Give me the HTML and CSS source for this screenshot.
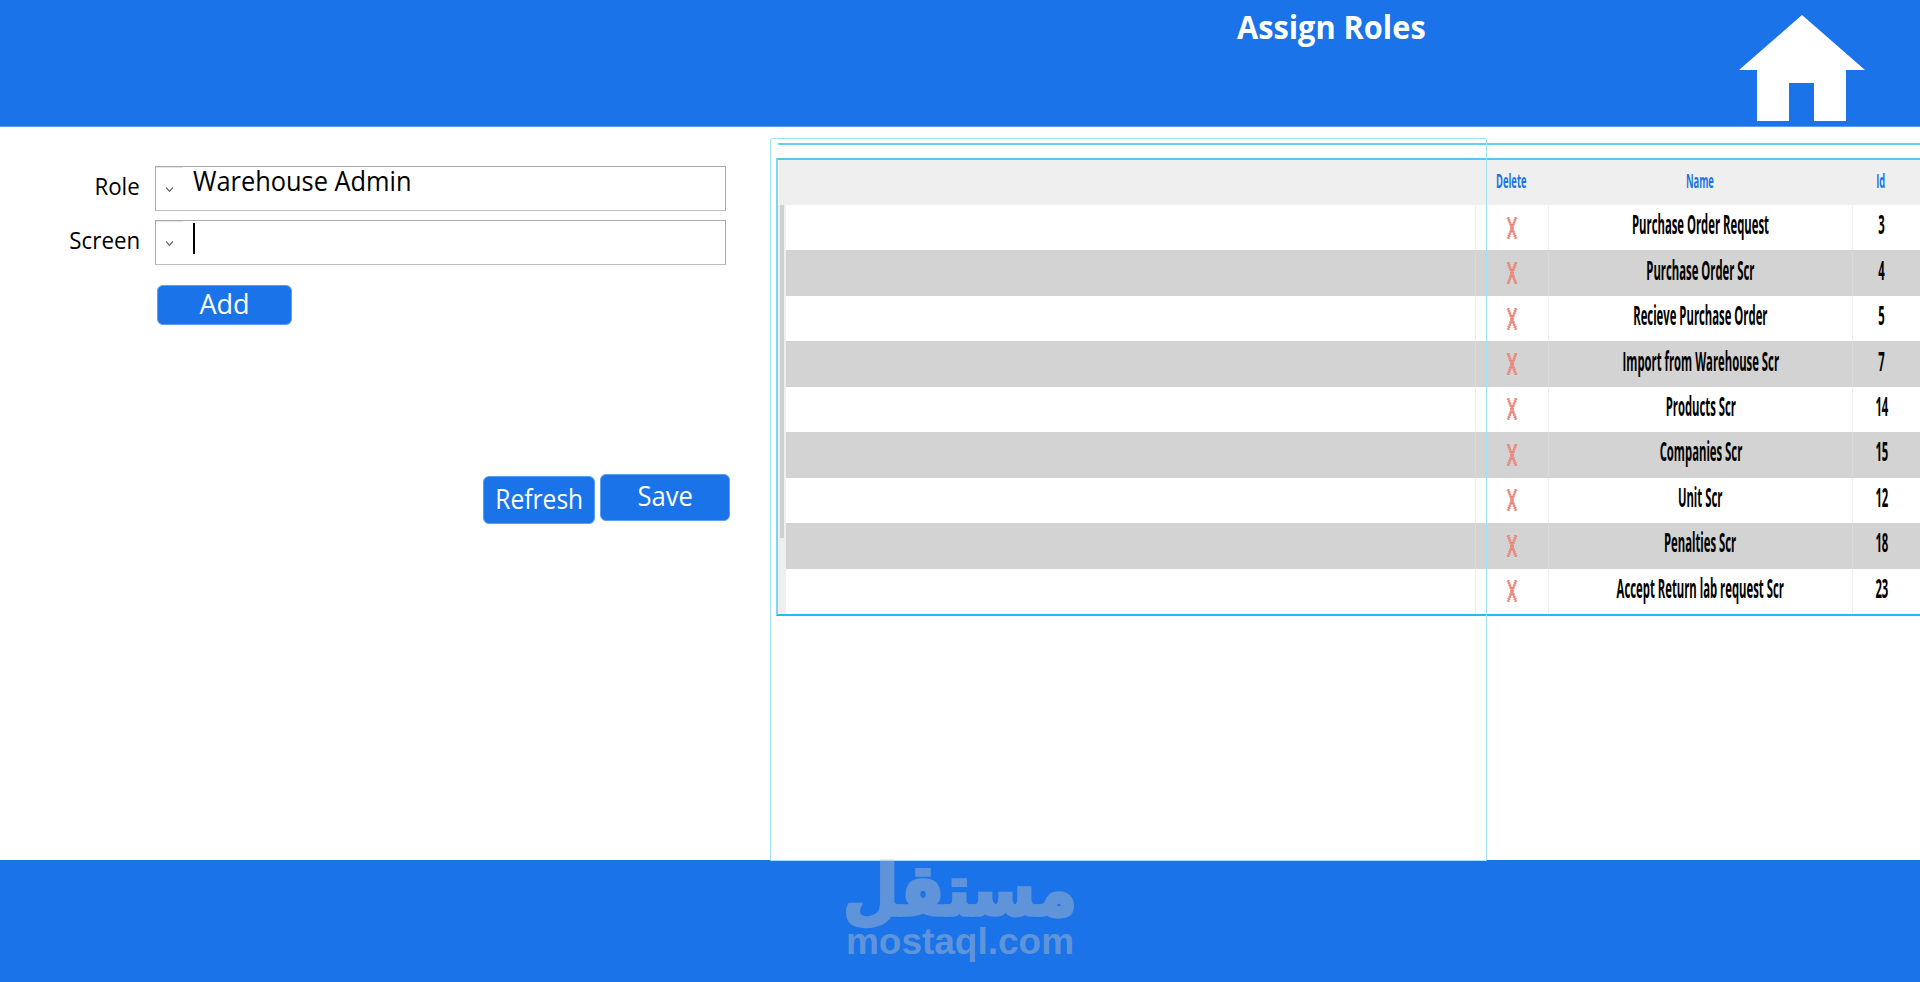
FILE: index.html
```html
<!DOCTYPE html>
<html lang="en">
<head>
<meta charset="utf-8">
<title>Assign Roles</title>
<link rel="stylesheet" href="styles.css">
</head>
<body>
<div class="page">
  <header class="topbar">
    <h1 class="title"><span class="title-text">Assign Roles</span></h1>
    <svg class="home" viewBox="0 0 126 106" aria-label="Home"><path d="M63 0 126 55H107V106H75V68H50V106H18V55H0Z" fill="#fff"/></svg>
  </header>
  <main class="main">
    <section class="form">
      <div class="fields">
        <label class="label"><span class="label-text">Role</span></label>
        <div class="combo">
          <span class="combo-btn"><svg class="chev" viewBox="0 0 8 6"><path d="M1 1.2 4 4.6 7 1.2" fill="none" stroke="#666" stroke-width="1.1"/></svg></span>
          <span class="combo-value">Warehouse Admin</span>
        </div>
        <label class="label"><span class="label-text">Screen</span></label>
        <div class="combo">
          <span class="combo-btn"><svg class="chev" viewBox="0 0 8 6"><path d="M1 1.2 4 4.6 7 1.2" fill="none" stroke="#666" stroke-width="1.1"/></svg></span>
          <span class="caret"></span>
        </div>
      </div>
      <button class="btn btn-add"><span class="btn-text">Add</span></button>
      <div class="actions">
        <button class="btn btn-refresh"><span class="btn-text">Refresh</span></button>
        <button class="btn btn-save"><span class="btn-text">Save</span></button>
      </div>
    </section>
    <section class="panel">
      <div class="panel-line"></div>
      <div class="grid">
        <div class="grid-head">
          <div class="hcell"></div>
          <div class="hcell"><span class="h-text">Delete</span></div>
          <div class="hcell"><span class="h-text">Name</span></div>
          <div class="hcell hcell-id"><span class="h-text">Id</span></div>
        </div>
        <div class="grid-body">
          <div class="gutter"><div class="thumb"></div></div>
          <div class="rows">
            <div class="row"><div class="cell"></div><div class="cell"><svg class="del" viewBox="0 0 12 22"><path class="del-edge" d="M2 .5 10 21.5M10 .5 2 21.5"/><path class="del-fill" d="M2 .5 10 21.5M10 .5 2 21.5"/></svg></div><div class="cell"><span class="c-text">Purchase Order Request</span></div><div class="cell cell-id"><span class="c-text">3</span></div></div>
            <div class="row alt"><div class="cell"></div><div class="cell"><svg class="del" viewBox="0 0 12 22"><path class="del-edge" d="M2 .5 10 21.5M10 .5 2 21.5"/><path class="del-fill" d="M2 .5 10 21.5M10 .5 2 21.5"/></svg></div><div class="cell"><span class="c-text">Purchase Order Scr</span></div><div class="cell cell-id"><span class="c-text">4</span></div></div>
            <div class="row"><div class="cell"></div><div class="cell"><svg class="del" viewBox="0 0 12 22"><path class="del-edge" d="M2 .5 10 21.5M10 .5 2 21.5"/><path class="del-fill" d="M2 .5 10 21.5M10 .5 2 21.5"/></svg></div><div class="cell"><span class="c-text">Recieve Purchase Order</span></div><div class="cell cell-id"><span class="c-text">5</span></div></div>
            <div class="row alt"><div class="cell"></div><div class="cell"><svg class="del" viewBox="0 0 12 22"><path class="del-edge" d="M2 .5 10 21.5M10 .5 2 21.5"/><path class="del-fill" d="M2 .5 10 21.5M10 .5 2 21.5"/></svg></div><div class="cell"><span class="c-text">Import from Warehouse Scr</span></div><div class="cell cell-id"><span class="c-text">7</span></div></div>
            <div class="row"><div class="cell"></div><div class="cell"><svg class="del" viewBox="0 0 12 22"><path class="del-edge" d="M2 .5 10 21.5M10 .5 2 21.5"/><path class="del-fill" d="M2 .5 10 21.5M10 .5 2 21.5"/></svg></div><div class="cell"><span class="c-text">Products Scr</span></div><div class="cell cell-id"><span class="c-text">14</span></div></div>
            <div class="row alt"><div class="cell"></div><div class="cell"><svg class="del" viewBox="0 0 12 22"><path class="del-edge" d="M2 .5 10 21.5M10 .5 2 21.5"/><path class="del-fill" d="M2 .5 10 21.5M10 .5 2 21.5"/></svg></div><div class="cell"><span class="c-text">Companies Scr</span></div><div class="cell cell-id"><span class="c-text">15</span></div></div>
            <div class="row"><div class="cell"></div><div class="cell"><svg class="del" viewBox="0 0 12 22"><path class="del-edge" d="M2 .5 10 21.5M10 .5 2 21.5"/><path class="del-fill" d="M2 .5 10 21.5M10 .5 2 21.5"/></svg></div><div class="cell"><span class="c-text">Unit Scr</span></div><div class="cell cell-id"><span class="c-text">12</span></div></div>
            <div class="row alt"><div class="cell"></div><div class="cell"><svg class="del" viewBox="0 0 12 22"><path class="del-edge" d="M2 .5 10 21.5M10 .5 2 21.5"/><path class="del-fill" d="M2 .5 10 21.5M10 .5 2 21.5"/></svg></div><div class="cell"><span class="c-text">Penalties Scr</span></div><div class="cell cell-id"><span class="c-text">18</span></div></div>
            <div class="row"><div class="cell"></div><div class="cell"><svg class="del" viewBox="0 0 12 22"><path class="del-edge" d="M2 .5 10 21.5M10 .5 2 21.5"/><path class="del-fill" d="M2 .5 10 21.5M10 .5 2 21.5"/></svg></div><div class="cell"><span class="c-text">Accept Return lab request Scr</span></div><div class="cell cell-id"><span class="c-text">23</span></div></div>
          </div>
        </div>
      </div>
    </section>
    <div class="outer-frame"></div>
  </main>
  <footer class="footer"></footer>
  <div class="watermark">
    <div class="wm-ar" lang="ar" dir="rtl"><span class="wm-ar-text">مستقل</span></div>
    <div class="wm-en">mostaql.com</div>
  </div>
</div>
</body>
</html>
```

FILE: styles.css
```css
* { box-sizing: border-box; }
html, body { margin: 0; padding: 0; background: #fff; }
body { font-family: "Open Sans", "Noto Sans", sans-serif; color: #000; overflow: hidden; }
.page { position: relative; display: flex; flex-direction: column; width: 1920px; height: 982px; overflow: hidden; }

.topbar { flex: none; display: flex; justify-content: flex-end; align-items: flex-start; height: 127px; background: #1a73e8; border-bottom: 1px solid #5a9cf0; padding-right: 55px; }
.title { margin: 5px 313px 0 0; width: 190px; height: 44px; font-size: 32px; line-height: 44px; font-weight: 700; color: #fff; text-align: center; white-space: nowrap; display: flex; justify-content: center; }
.title-text { display: inline-block; transform: scaleX(.96); }
.home { width: 126px; height: 106px; margin-top: 15px; display: block; }

.main { position: relative; flex: none; height: 733px; display: flex; }

.form { flex: none; width: 776px; padding-top: 39px; }
.fields { display: grid; grid-template-columns: 140px 571px; column-gap: 15px; row-gap: 9px; grid-auto-rows: 45px; }
.label { display: flex; justify-content: flex-end; align-items: center; font-size: 24px; line-height: 32px; padding-bottom: 5px; }
.label-text { display: inline-block; transform-origin: right center; transform: scaleX(.93); }
.combo { display: flex; align-items: flex-start; border: 1px solid #a9a9ae; border-bottom-color: #bdbdc0; background: #fff; }
.combo-btn { flex: none; width: 27px; height: 43px; display: flex; align-items: center; justify-content: center; border-top: 1px solid #e4e4e4; }
.chev { width: 9px; height: 7px; display: block; }
.combo-value { margin: 0 0 0 10px; font-size: 27px; line-height: 28px; white-space: nowrap; display: inline-block; transform-origin: left center; transform: scaleX(.94); }
.caret { width: 2px; height: 31px; margin: 2px 0 0 10px; background: #000; }

.btn { display: block; padding: 0 0 3px; background: #1a73e8; border: 1px solid #5aa0f2; border-radius: 6px; color: #fff; font-family: inherit; font-size: 27px; line-height: 34px; cursor: pointer; }
.btn-text { display: inline-block; white-space: nowrap; }
.btn-add { width: 135px; height: 40px; margin: 20px 0 0 157px; }
.btn-add .btn-text { transform: scaleX(1); }
.actions { display: flex; align-items: flex-start; gap: 5px; width: 730px; justify-content: flex-end; margin-top: 149px; }
.btn-refresh { width: 112px; height: 48px; margin-top: 2px; }
.btn-refresh .btn-text { transform: scaleX(.91); }
.btn-save { width: 130px; height: 47px; }
.btn-save .btn-text { transform: scaleX(.95); }

.panel { flex: 1; min-width: 0; padding-top: 16px; }
.panel-line { height: 2px; margin-left: 2px; background: #62d2f4; }
.grid { margin: 13px 0 0 0; width: 1144px; border-top: 2px solid #55c6ee; border-left: 2px solid #7fd6f3; border-bottom: 2px solid #22bdee; background: #fff; }
.grid-head { display: grid; grid-template-columns: 696px 73px 304px 68px; height: 45px; background: #efefef; margin-left: 1px; }
.hcell { display: flex; align-items: center; justify-content: center; padding-bottom: 4px; font-size: 18px; font-weight: 700; color: #1a73e8; }
.hcell-id { padding-right: 10px; }
.h-text { display: inline-block; transform: scaleX(.52) scaleY(1.05); white-space: nowrap; }
.grid-body { display: flex; height: 409px; }
.gutter { flex: none; width: 8px; background: #efefef; padding-left: 2px; }
.thumb { width: 4px; height: 333px; background: #d0d0d0; }
.rows { flex: 1; min-width: 0; display: grid; grid-auto-rows: 1fr; }
.row { display: grid; grid-template-columns: 689px 73px 304px 68px; background: #fff; }
.row.alt { background: #d3d3d3; }
.cell { display: flex; align-items: center; justify-content: center; padding-bottom: 7px; border-left: 1px solid #eee; font-size: 26px; font-weight: 700; overflow: hidden; }
.row.alt .cell { border-left-color: #dadada; }
.cell:first-child { border-left: 0; }
.cell-id { padding-right: 10px; }
.c-text { display: inline-block; white-space: nowrap; transform: scaleX(.435); }
.del { width: 12px; height: 22px; display: block; margin-top: 7px; }
.del-edge { fill: none; stroke: #c9584a; stroke-width: 2.8; stroke-dasharray: 1 1.4; }
.del-fill { fill: none; stroke: #f28b7e; stroke-width: 1.9; }

.outer-frame { position: absolute; left: 770px; top: 11px; width: 717px; height: 723px; border: 1px solid #9fe3f8; border-radius: 2px 2px 0 0; pointer-events: none; }

.footer { flex: 1; background: #1a73e8; }

.watermark { position: absolute; left: 845px; top: 856px; width: 230px; color: #c6c6c6; opacity: .4; text-align: center; }
.wm-ar { height: 68px; display: flex; justify-content: center; font-family: "DejaVu Sans", sans-serif; font-weight: 700; font-size: 64px; line-height: 68px; white-space: nowrap; -webkit-text-stroke: 3px #c6c6c6; }
.wm-ar-text { display: inline-block; transform: scaleY(1.12); }
.wm-en { font-family: "Liberation Sans", sans-serif; font-weight: 700; font-size: 37px; line-height: 35px; white-space: nowrap; }
```
